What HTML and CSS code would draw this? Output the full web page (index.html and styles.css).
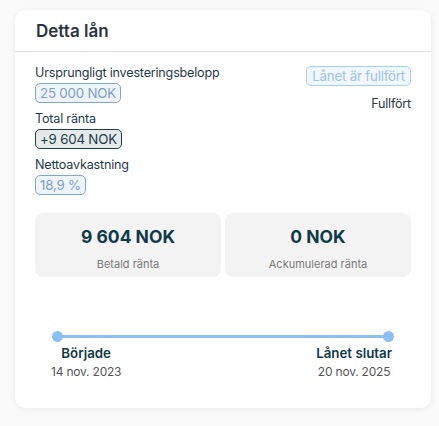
FILE: index.html
```html
<!DOCTYPE html>
<html lang="sv">
<head>
<meta charset="utf-8">
<link rel="stylesheet" href="styles.css">
</head>
<body>
<div class="card">
  <div class="card-header">Detta lån</div>
  <div class="card-body">
    <div class="top">
      <div class="facts">
        <div class="fact">
          <div class="label">Ursprungligt investeringsbelopp</div>
          <span class="pill pill-blue">25 000 NOK</span>
        </div>
        <div class="fact">
          <div class="label">Total ränta</div>
          <span class="pill pill-dark">+9 604 NOK</span>
        </div>
        <div class="fact">
          <div class="label">Nettoavkastning</div>
          <span class="pill pill-blue">18,9 %</span>
        </div>
      </div>
      <div class="status">
        <span class="pill pill-status">Lånet är fullfört</span>
        <div class="status-text">Fullfört</div>
      </div>
    </div>
    <div class="stats">
      <div class="stat">
        <div class="stat-value">9 604 NOK</div>
        <div class="stat-label">Betald ränta</div>
      </div>
      <div class="stat">
        <div class="stat-value">0 NOK</div>
        <div class="stat-label">Ackumulerad ränta</div>
      </div>
    </div>
    <div class="timeline">
      <div class="track">
        <span class="dot"></span>
        <span class="line"></span>
        <span class="dot"></span>
      </div>
      <div class="ends">
        <div class="end end-start">
          <div class="end-title">Började</div>
          <div class="end-date">14 nov. 2023</div>
        </div>
        <div class="end end-finish">
          <div class="end-title">Lånet slutar</div>
          <div class="end-date">20 nov. 2025</div>
        </div>
      </div>
    </div>
  </div>
</div>
</body>
</html>
```
FILE: styles.css
```css
* { box-sizing: border-box; }
html, body { margin: 0; padding: 0; }
body {
  background: #fafafa;
  font-family: Inter, "Noto Sans", sans-serif;
  color: #1d3a48;
  padding: 10px 8px 18px 15px;
  width: 439px;
}
.card {
  width: 416px;
  height: 398px;
  background: #fff;
  border-radius: 10px;
  box-shadow: 0 1px 6px rgba(0,0,0,0.07);
}
.card-header {
  height: 42px;
  padding: 11px 21px 0;
  font-size: 17px;
  line-height: 21px;
  font-weight: 600;
  color: #2a3441;
  border-bottom: 1px solid #e3e3e3;
}
.card-body {
  padding: 13px 20px 0;
}
.top {
  display: flex;
  justify-content: space-between;
}
.facts {
  display: flex;
  flex-direction: column;
  gap: 8px;
}
.fact {
  display: flex;
  flex-direction: column;
  align-items: flex-start;
  gap: 2px;
}
.label {
  font-size: 12.6px;
  line-height: 16px;
  color: #1d3a48;
  letter-spacing: -0.2px;
}
.pill {
  display: inline-block;
  font-size: 13.3px;
  line-height: 18px;
  padding: 0 4px;
  border-radius: 5px;
  letter-spacing: -0.2px;
}
.pill-blue {
  border: 1px solid #7ea7d6;
  background: #eef4fb;
  color: #7f9ec4;
}
.pill-dark {
  border: 1px solid #1f3d45;
  background: #e4eaea;
  color: #1d3a48;
}
.pill-status {
  border: 1px solid #a9ccf2;
  background: #f1f7fe;
  color: #9dc2ec;
  padding: 0 5px;
}
.status {
  display: flex;
  flex-direction: column;
  align-items: flex-end;
  gap: 10px;
  padding-top: 1px;
}
.status-text {
  font-size: 12.6px;
  line-height: 16px;
  color: #1d3a48;
  letter-spacing: -0.2px;
}
.stats {
  display: grid;
  grid-template-columns: 1fr 1fr;
  gap: 4px;
  margin-top: 18px;
}
.stat {
  background: #f3f3f3;
  border-radius: 8px;
  height: 64px;
  display: flex;
  flex-direction: column;
  align-items: center;
  padding-top: 13px;
}
.stat-value {
  font-size: 17.5px;
  font-weight: 700;
  line-height: 22px;
  color: #10394a;
}
.stat-label {
  margin-top: 10px;
  font-size: 11px;
  line-height: 13px;
  color: #7a7a7a;
}
.timeline {
  margin-top: 54px;
  padding: 0 17px;
}
.track {
  display: flex;
  align-items: center;
}
.dot {
  width: 11px;
  height: 11px;
  border-radius: 50%;
  background: #8cbff3;
  flex: none;
}
.line {
  flex: 1;
  height: 3px;
  background: #8cbff3;
  margin: 0 -2px;
}
.ends {
  display: flex;
  justify-content: space-between;
  margin-top: 3px;
}
.end {
  display: flex;
  flex-direction: column;
  align-items: center;
  gap: 3px;
}
.end-start { margin-left: -1px; }
.end-finish { margin-right: 2px; }
.end-title {
  font-size: 13.3px;
  font-weight: 600;
  line-height: 16px;
  color: #10394a;
}
.end-date {
  font-size: 12px;
  line-height: 16px;
  color: #555;
  letter-spacing: -0.2px;
}
```
